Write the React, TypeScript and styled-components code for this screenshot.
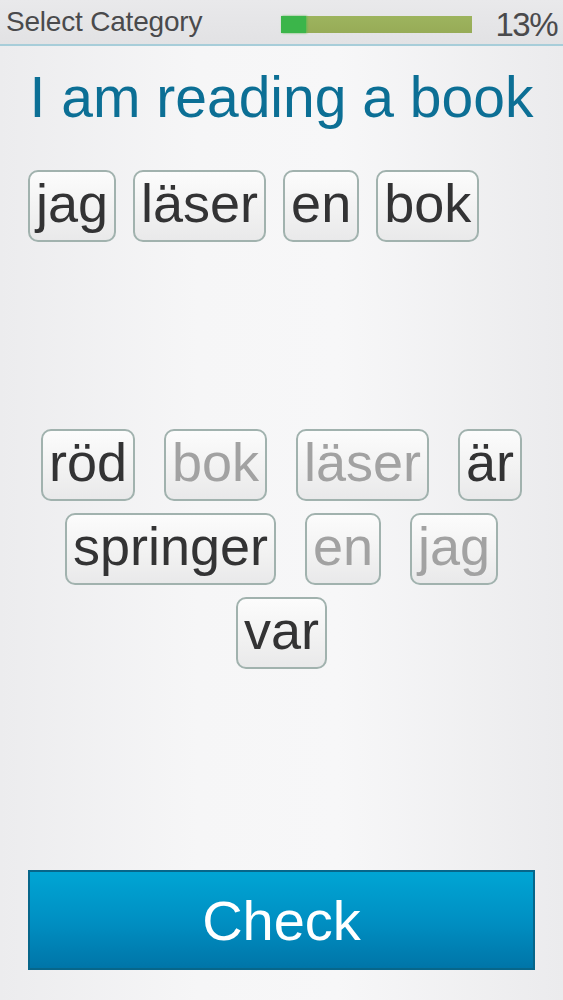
import * as React from "react";
import styled, { createGlobalStyle } from "styled-components";

const GlobalStyle = createGlobalStyle`
  html, body {
    margin: 0;
    padding: 0;
  }
  body {
    font-family: "Liberation Sans", Arial, sans-serif;
    background: #efeff1;
  }
`;

const Screen = styled.div`
  display: flex;
  flex-direction: column;
  width: 563px;
  height: 1000px;
  overflow: hidden;
  background: linear-gradient(90deg, #ececee 0%, #f6f6f7 35%, #f7f7f8 60%, #ebebed 100%);
`;

const Header = styled.div`
  display: flex;
  align-items: flex-start;
  height: 44px;
  padding: 0 6px;
  background: linear-gradient(180deg, #e9e9eb 0%, #e2e2e4 100%);
  border-bottom: 2px solid #a7cdd9;
`;

const CategoryLabel = styled.div`
  margin-top: 7px;
  font-size: 28px;
  line-height: 30px;
  letter-spacing: -0.2px;
  color: #4a4a4c;
`;

const ProgressTrack = styled.div`
  margin: 16px 0 0 auto;
  width: 191px;
  height: 17px;
  background: linear-gradient(180deg, #9db45e 0%, #97ab57 100%);
`;

const ProgressFill = styled.div`
  height: 100%;
  background: #3bb54a;
  box-shadow: 1px 0 2px #5cb84e;
`;

const Percent = styled.div`
  margin: 7px 0 0 23px;
  font-size: 33px;
  line-height: 36px;
  letter-spacing: -1.5px;
  color: #4a4a4c;
`;

const Prompt = styled.h1`
  margin: 19px 0 0;
  text-align: center;
  font-weight: normal;
  font-size: 57px;
  line-height: 64px;
  color: #0c6f95;
`;

const AnswerArea = styled.div`
  display: flex;
  flex-wrap: wrap;
  align-content: flex-start;
  gap: 12px 17px;
  height: 259px;
  margin-top: 41px;
  padding: 0 28px;
`;

const WordBank = styled.div`
  display: flex;
  flex-wrap: wrap;
  justify-content: center;
  gap: 12px 29px;
  padding: 0 20px;
`;

const Tile = styled.div<{ $used?: boolean }>`
  height: 62px;
  padding: 0 6px 6px;
  border: 2px solid #a1b2ae;
  border-radius: 10px;
  background: linear-gradient(180deg, #fcfcfc 0%, #f1f1f1 60%, #e9e9ea 100%);
  font-size: 54px;
  line-height: 62px;
  color: ${p => (p.$used ? "#a2a2a2" : "#333334")};
`;

const CheckButton = styled.button`
  display: block;
  margin: auto 28px 30px;
  height: 100px;
  border: 2px solid #07668a;
  background: linear-gradient(180deg, #00a5d4 0%, #0090c3 50%, #0075a8 100%);
  font-family: "Liberation Sans", Arial, sans-serif;
  font-size: 56px;
  color: #ffffff;
  cursor: pointer;
`;

const answer = ["jag", "läser", "en", "bok"];

const bank: { word: string; used: boolean }[] = [
  { word: "röd", used: false },
  { word: "bok", used: true },
  { word: "läser", used: true },
  { word: "är", used: false },
  { word: "springer", used: false },
  { word: "en", used: true },
  { word: "jag", used: true },
  { word: "var", used: false },
];

const progress = 13;

const App = () => {
  return (
    <Screen>
      <GlobalStyle />
      <Header>
        <CategoryLabel>Select Category</CategoryLabel>
        <ProgressTrack>
          <ProgressFill style={{ width: `${progress}%` }} />
        </ProgressTrack>
        <Percent>{progress}%</Percent>
      </Header>
      <Prompt>I am reading a book</Prompt>
      <AnswerArea>
        {answer.map((w, i) => (
          <Tile key={i}>{w}</Tile>
        ))}
      </AnswerArea>
      <WordBank>
        {bank.map((b, i) => (
          <Tile key={i} $used={b.used}>
            {b.word}
          </Tile>
        ))}
      </WordBank>
      <CheckButton>Check</CheckButton>
    </Screen>
  );
};

export default App;
